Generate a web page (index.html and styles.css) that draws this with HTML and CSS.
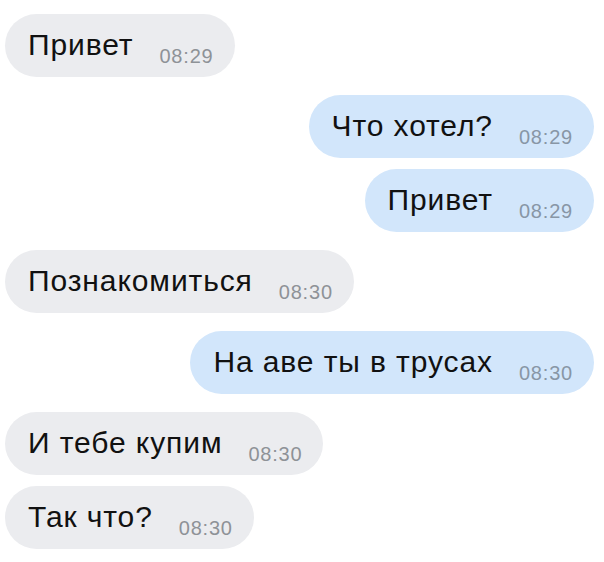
FILE: index.html
```html
<!DOCTYPE html>
<html lang="ru">
<head>
  <meta charset="UTF-8" />
  <meta name="viewport" content="width=device-width, initial-scale=1.0"/>
  <title>Чат</title>
  <link rel="stylesheet" href="styles.css">
</head>
<body>

  <div class="chat">
    <div class="row in">
      <div class="bubble">Привет<span class="time">08:29</span></div>
    </div>

    <div class="row out">
      <div class="bubble">Что хотел?<span class="time">08:29</span></div>
    </div>

    <div class="row out same">
      <div class="bubble">Привет<span class="time">08:29</span></div>
    </div>

    <div class="row in">
      <div class="bubble">Познакомиться<span class="time">08:30</span></div>
    </div>

    <div class="row out">
      <div class="bubble">На аве ты в трусах<span class="time">08:30</span></div>
    </div>

    <div class="row in">
      <div class="bubble">И тебе купим<span class="time">08:30</span></div>
    </div>

    <div class="row in same">
      <div class="bubble">Так что?<span class="time">08:30</span></div>
    </div>
  </div>

</body>
</html>
```

FILE: styles.css
```css
body {
  background-color: white;
  font-family: 'Liberation Sans', Arial, sans-serif;
  margin: 0;
  color: #111;
}

.chat {
  padding: 14px 10px 0 5px;
}

.row {
  display: flex;
  margin-top: 18px;
}

.row:first-child {
  margin-top: 0;
}

.row.same {
  margin-top: 11px;
}

.row.out {
  justify-content: flex-end;
}

.bubble {
  height: 63px;
  box-sizing: border-box;
  padding: 0 21px 0 23px;
  border-radius: 32px;
  background-color: #ebecef;
  font-size: 30px;
  letter-spacing: 0.9px;
  line-height: 61px;
  white-space: nowrap;
}

.out .bubble {
  background-color: #d2e6fb;
}

.time {
  font-size: 20px;
  letter-spacing: 0.8px;
  line-height: 1;
  margin-left: 26px;
  vertical-align: -8px;
  color: #8e9297;
}

.out .time {
  color: #8896a6;
}
```
